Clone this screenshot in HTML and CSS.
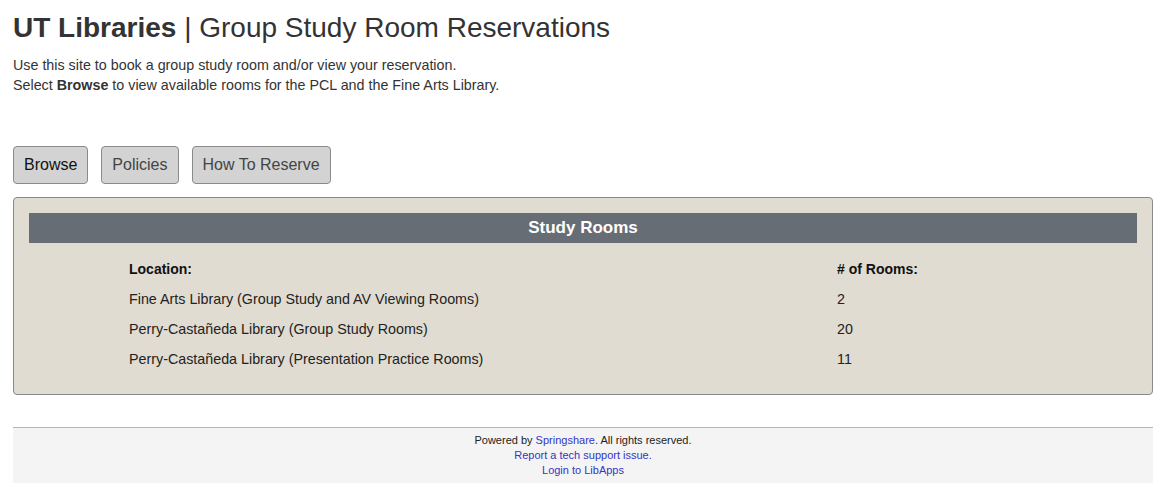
FILE: index.html
```html
<!DOCTYPE html>
<html>
<head>
<meta charset="utf-8">
<title>Group Study Room Reservations</title>
<link rel="stylesheet" href="styles.css">
</head>
<body>
<div class="page">
  <h1 class="title"><strong>UT Libraries</strong> | Group Study Room Reservations</h1>
  <p class="intro">Use this site to book a group study room and/or view your reservation.<br>Select <strong>Browse</strong> to view available rooms for the PCL and the Fine Arts Library.</p>
  <div class="tabs">
    <button class="btn btn-active">Browse</button>
    <button class="btn">Policies</button>
    <button class="btn">How To Reserve</button>
  </div>
  <div class="panel">
    <div class="panel-head">Study Rooms</div>
    <table class="rooms">
      <thead>
        <tr><th class="col-loc">Location:</th><th># of Rooms:</th></tr>
      </thead>
      <tbody>
        <tr><td>Fine Arts Library (Group Study and AV Viewing Rooms)</td><td>2</td></tr>
        <tr><td>Perry-Castañeda Library (Group Study Rooms)</td><td>20</td></tr>
        <tr><td>Perry-Castañeda Library (Presentation Practice Rooms)</td><td>11</td></tr>
      </tbody>
    </table>
  </div>
  <div class="footer">
    <div>Powered by <a href="#">Springshare</a>. All rights reserved.</div>
    <div><a href="#">Report a tech support issue.</a></div>
    <div><a href="#">Login to LibApps</a></div>
  </div>
</div>
</body>
</html>
```
FILE: styles.css
```css
html, body {
  margin: 0;
  padding: 0;
  background: #fff;
}
body {
  font-family: "Liberation Sans", Arial, sans-serif;
  color: #333;
  font-size: 14px;
  line-height: 20px;
}
.page {
  padding: 0 16px 0 13px;
}
.title {
  margin: 0;
  padding-top: 12px;
  font-size: 28px;
  line-height: 32px;
  font-weight: normal;
  color: #333;
}
.title strong {
  font-weight: bold;
}
.intro {
  margin: 11px 0 0;
  font-size: 14.3px;
  line-height: 20px;
  color: #333;
}
.tabs {
  display: flex;
  gap: 13px;
  margin-top: 51px;
}
.btn {
  font-family: "Liberation Sans", Arial, sans-serif;
  font-size: 16px;
  line-height: 20px;
  padding: 8px 10px;
  background: #d3d3d3;
  border: 1px solid #8a8a8a;
  border-radius: 4px;
  color: #444;
  margin: 0;
}
.btn-active {
  color: #111;
}
.panel {
  margin-top: 13px;
  background: #e0dcd2;
  border: 1px solid #8a8a8a;
  border-radius: 4px;
  padding: 15px 15px 20px;
}
.panel-head {
  background: #676d74;
  color: #fff;
  font-weight: bold;
  font-size: 17px;
  line-height: 30px;
  height: 30px;
  text-align: center;
}
.rooms {
  margin: 11px 0 0 100px;
  border-collapse: collapse;
  color: #222;
  font-size: 14.3px;
}
.rooms th {
  text-align: left;
  font-weight: bold;
  color: #111;
  font-size: 14px;
}
.rooms th, .rooms td {
  padding: 0;
  height: 30px;
  line-height: 30px;
  vertical-align: middle;
}
.col-loc {
  width: 708px;
}
.footer {
  margin-top: 32px;
  border-top: 1px solid #b5b5b5;
  background: #f4f4f4;
  text-align: center;
  font-size: 11px;
  line-height: 15px;
  padding: 5px 0 5px;
  color: #222;
}
.footer a {
  color: #3535c8;
  text-decoration: none;
}
```
